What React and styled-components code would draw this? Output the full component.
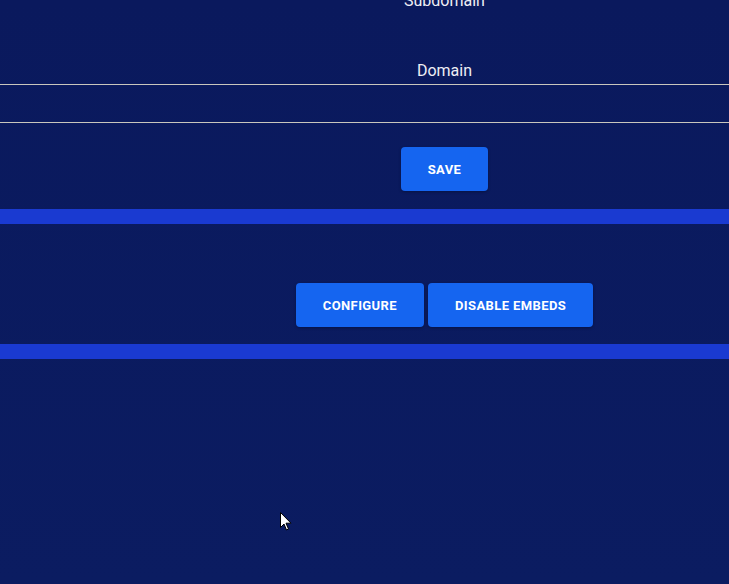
import React from 'react';
import styled, { createGlobalStyle } from 'styled-components';

const GlobalStyle = createGlobalStyle`
  html, body {
    margin: 0;
    padding: 0;
  }
  body {
    font-family: Roboto, "Liberation Sans", sans-serif;
    background: #0a1a5d;
    overflow: hidden;
  }
`;

const Page = styled.div`
  position: relative;
  height: 584px;
  overflow: hidden;
  background: linear-gradient(180deg, #0a195d 0%, #0b1c61 100%);
  color: #f1f1f5;
`;

const Form = styled.div`
  display: flex;
  flex-direction: column;
  margin-top: -9px;
`;

const Column = styled.div`
  display: flex;
  flex-direction: column;
  align-items: center;
  padding-left: 160px;
  margin-top: ${(p) => p.$gap || 0}px;
`;

const Label = styled.div`
  font-size: 16px;
  line-height: 20px;
  height: 20px;
  color: #eeeef4;
  margin-top: ${(p) => p.$gap || 0}px;
`;

const Input = styled.div`
  height: 37px;
  margin-top: 3px;
  border-top: 1px solid #c9c6bd;
  border-bottom: 1px solid #c9c6bd;
`;

const Button = styled.button`
  height: 44px;
  padding: 0 27px;
  border: none;
  border-radius: 4px;
  background: #1565f0;
  color: #ffffff;
  font-family: Roboto, "Liberation Sans", sans-serif;
  font-size: 13px;
  font-weight: 700;
  letter-spacing: 0.4px;
  text-transform: uppercase;
  box-shadow: 0 1px 3px rgba(0, 0, 0, 0.3);
  cursor: pointer;
`;

const Bar = styled.div`
  height: 15px;
  margin-top: ${(p) => p.$gap}px;
  background: #1a3ad1;
`;

const Actions = styled.div`
  display: flex;
  justify-content: center;
  gap: 4px;
  padding-left: 160px;
  margin-top: 59px;
`;

const Cursor = styled.svg`
  position: absolute;
  left: 280px;
  top: 512px;
`;

export default function App() {
  return (
    <>
      <GlobalStyle />
      <Page>
        <Form>
          <Column>
            <Label>Subdomain</Label>
            <Label $gap={50}>Domain</Label>
          </Column>
          <Input />
          <Column $gap={24}>
            <Button>Save</Button>
          </Column>
          <Bar $gap={18} />
          <Actions>
            <Button>Configure</Button>
            <Button>Disable embeds</Button>
          </Actions>
          <Bar $gap={17} />
        </Form>
        <Cursor width="12" height="19" viewBox="0 0 12 19">
          <path
            d="M0.5 0.5 L0.5 15.5 L4 12 L6.5 18 L8.5 17 L6 11.2 L11 11.2 Z"
            fill="#ffffff"
            stroke="#000000"
            strokeWidth="1"
            strokeLinejoin="miter"
          />
        </Cursor>
      </Page>
    </>
  );
}
